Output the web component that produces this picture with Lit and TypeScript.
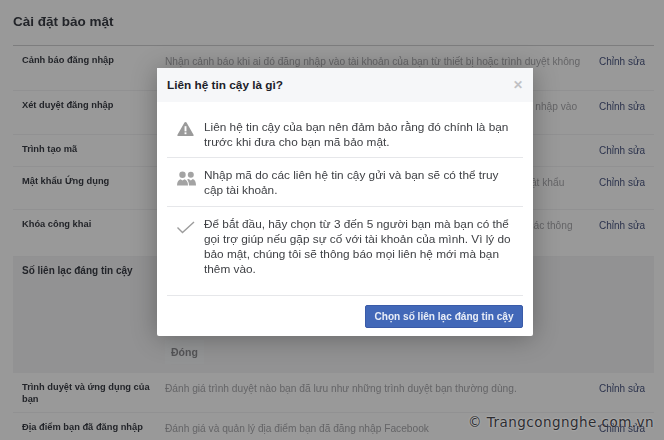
import { LitElement, html, css, svg } from 'lit';
import { customElement } from 'lit/decorators.js';

const rows = [
  { label: 'Cảnh báo đăng nhập', desc: 'Nhận cảnh báo khi ai đó đăng nhập vào tài khoản của bạn từ thiết bị hoặc trình duyệt không', h: 45 },
  { label: 'Xét duyệt đăng nhập', desc: 'Sử dụng điện thoại của bạn như một lớp bảo mật bổ sung ngăn người khác đăng nhập vào', h: 44 },
  { label: 'Trình tạo mã', desc: 'Sử dụng ứng dụng Facebook để lấy mã bảo mật', h: 32 },
  { label: 'Mật khẩu Ứng dụng', desc: 'Dùng mật khẩu đặc biệt để đăng nhập vào các ứng dụng của bạn thay vì dùng mật khẩu', h: 43 },
  { label: 'Khóa công khai', desc: 'Quản lý khóa công khai OpenPGP của bạn và chia sẻ khóa này để giúp mã hóa các thông', h: 47 },
];

const warnIcon = svg`<svg width="17" height="16" viewBox="0 0 18 16"><path fill="#9a9a9a" d="M9 0.5c.5 0 .9.3 1.100.7l7.400 12.800c.4.7-.1 1.500-.9 1.500H1.400c-.8 0-1.300-.8-.9-1.500L7.900 1.200C8.100.8 8.500.5 9 .5z"/><rect x="8" y="5" width="2" height="5.500" fill="#fff"/><rect x="8" y="11.500" width="2" height="2" fill="#fff"/></svg>`;
const peopleIcon = svg`<svg width="19" height="15" viewBox="0 0 19 15"><g fill="#a3a3a3"><circle cx="5.500" cy="3.700" r="3.200"/><path d="M0 14.500c0-3.500 1.500-5.500 3.500-6.200l2 1.300 2-1.300c2 .7 3.500 2.700 3.500 6.200z"/><circle cx="13.800" cy="3.700" r="3"/><path d="M12 14.500c0-2.500-.6-4.500-2-6l1.800-.4 2 1.300 2-1.300c2 .7 3.200 2.700 3.200 6.400z"/></g></svg>`;
const checkIcon = svg`<svg width="18" height="13" viewBox="0 0 18 13"><path fill="none" stroke="#9c9c9c" stroke-width="1.400" d="M.5 6.500l5 5L17 1"/></svg>`;

@customElement('app-root')
export class AppRoot extends LitElement {
  static styles = css`
    :host {
      display: block;
      width: 664px;
      height: 440px;
      overflow: hidden;
      position: relative;
      background: #fff;
      font-family: 'Liberation Sans', Arial, sans-serif;
      color: #3a3d45;
    }
    .page {
      padding: 0 10px 0 13px;
      filter: blur(0.45px);
    }
    h1 {
      margin: 0;
      height: 46px;
      box-sizing: border-box;
      padding-top: 14px;
      font-size: 13.500px;
      line-height: 16px;
      font-weight: 700;
      border-bottom: 1px solid #d0d0d3;
    }
    .row {
      display: grid;
      grid-template-columns: 143px 1fr 56px;
      box-sizing: border-box;
      padding: 8px 0 0 9px;
      font-size: 10px;
      line-height: 13px;
      white-space: nowrap;
      border-bottom: 1px solid #f2f2f4;
    }
    .label {
      font-size: 9.300px;
      line-height: 12px;
      font-weight: 700;
      white-space: normal;
      width: 135px;
    }
    .desc {
      overflow: hidden;
      color: #a8a8ac;
      font-size: 10.200px;
      margin-top: 1px;
      width: 418px;
    }
    .edit {
      color: #4a5680;
      font-size: 10px;
      margin: 1px 0 0 1px;
    }
    .panel {
      height: 116px;
      box-sizing: border-box;
      background: #f3f3f5;
      padding: 7px 0 0 9px;
      display: grid;
      grid-template-columns: 143px 1fr;
      grid-template-rows: 1fr auto;
    }
    .panel .title {
      font-size: 10px;
      line-height: 14px;
      font-weight: 700;
    }
    .close-btn {
      grid-column: 2;
      justify-self: start;
      margin: 0 0 9px 0;
      padding: 0 6px;
      height: 24px;
      box-sizing: border-box;
      font-size: 10.500px;
      line-height: 24px;
      font-weight: 700;
      color: #8c8d91;
      background: #f6f7f9;
    }
    .row.last {
      border: 0;
    }
    .scrim {
      position: absolute;
      inset: 0;
      background: rgba(0, 0, 0, 0.4);
    }
    .modal {
      position: absolute;
      left: 157px;
      top: 68px;
      width: 376px;
      height: 268px;
      background: #fff;
      display: flex;
      flex-direction: column;
      box-shadow: 0 2px 26px rgba(0, 0, 0, 0.3);
      border-radius: 2px;
      filter: blur(0.35px);
    }
    .head {
      height: 34px;
      flex: none;
      box-sizing: border-box;
      padding: 0 10px;
      background: #f6f7f9;
      display: flex;
      align-items: center;
      justify-content: space-between;
      font-size: 11.800px;
      font-weight: 700;
      color: #1d2129;
    }
    .x {
      font-size: 12px;
      font-weight: 700;
      color: #c0c1c4;
    }
    .body {
      padding: 0 10px;
      flex: 1;
    }
    .item {
      display: flex;
      align-items: flex-start;
      box-sizing: border-box;
      border-bottom: 1px solid #e6e7ea;
      font-size: 11.800px;
      line-height: 15px;
      color: #3f4145;
      white-space: nowrap;
    }
    .item .ic {
      width: 37px;
      flex: none;
      padding-left: 10px;
      box-sizing: border-box;
      display: flex;
    }
    .foot {
      height: 40px;
      flex: none;
      box-sizing: border-box;
      display: flex;
      justify-content: flex-end;
      align-items: flex-start;
      padding: 9px 10px 0;
    }
    .primary {
      height: 23px;
      width: 158px;
      text-align: center;
      box-sizing: border-box;
      background: #4268b8;
      border: 1px solid #3a5ba8;
      border-radius: 2px;
      color: #e8edf7;
      font-size: 10.100px;
      line-height: 21px;
      font-weight: 700;
      white-space: nowrap;
    }
    .mark {
      position: absolute;
      left: 468px;
      top: 413px;
      font-family: 'DejaVu Sans', sans-serif;
      font-size: 13.500px;
      line-height: 18px;
      letter-spacing: 0.470px;
      color: #2c2c30;
      white-space: nowrap;
      text-shadow: 0 0 2px rgba(255, 255, 255, 0.5);
    }
  `;

  render() {
    return html`
      <div class="page">
        <h1>Cài đặt bảo mật</h1>
        ${rows.map(
          (r) => html`
            <div class="row" style="height:${r.h}px">
              <div class="label">${r.label}</div>
              <div class="desc">${r.desc}</div>
              <div class="edit">Chỉnh sửa</div>
            </div>
          `
        )}
        <div class="panel">
          <div class="title">Số liên lạc đáng tin cậy</div>
          <div></div>
          <div class="close-btn">Đóng</div>
        </div>
        <div class="row" style="height:40px">
          <div class="label">Trình duyệt và ứng dụng của bạn</div>
          <div class="desc">Đánh giá trình duyệt nào bạn đã lưu như những trình duyệt bạn thường dùng.</div>
          <div class="edit">Chỉnh sửa</div>
        </div>
        <div class="row last">
          <div class="label">Địa điểm bạn đã đăng nhập</div>
          <div class="desc">Đánh giá và quản lý địa điểm bạn đã đăng nhập Facebook</div>
          <div class="edit">Chỉnh sửa</div>
        </div>
      </div>
      <div class="scrim"></div>
      <div class="modal">
        <div class="head"><span>Liên hệ tin cậy là gì?</span><span class="x">✕</span></div>
        <div class="body">
          <div class="item" style="height:56px;padding-top:18px">
            <div class="ic" style="padding-top:1px">${warnIcon}</div>
            <div>Liên hệ tin cậy của bạn nên đảm bảo rằng đó chính là bạn<br />trước khi đưa cho bạn mã bảo mật.</div>
          </div>
          <div class="item" style="height:49px;padding-top:10px">
            <div class="ic" style="padding-top:3px">${peopleIcon}</div>
            <div>Nhập mã do các liên hệ tin cậy gửi và bạn sẽ có thể truy<br />cập tài khoản.</div>
          </div>
          <div class="item" style="height:89px;padding-top:10px">
            <div class="ic" style="padding-top:4px">${checkIcon}</div>
            <div>
              Để bắt đầu, hãy chọn từ 3 đến 5 người bạn mà bạn có thể<br />gọi trợ giúp nếu gặp sự cố với tài khoản của mình. Vì lý do<br />bảo mật, chúng tôi sẽ thông báo mọi liên hệ mới mà bạn<br />thêm vào.
            </div>
          </div>
        </div>
        <div class="foot"><div class="primary">Chọn số liên lạc đáng tin cậy</div></div>
      </div>
      <div class="mark">© Trangcongnghe.com.vn</div>
    `;
  }
}
